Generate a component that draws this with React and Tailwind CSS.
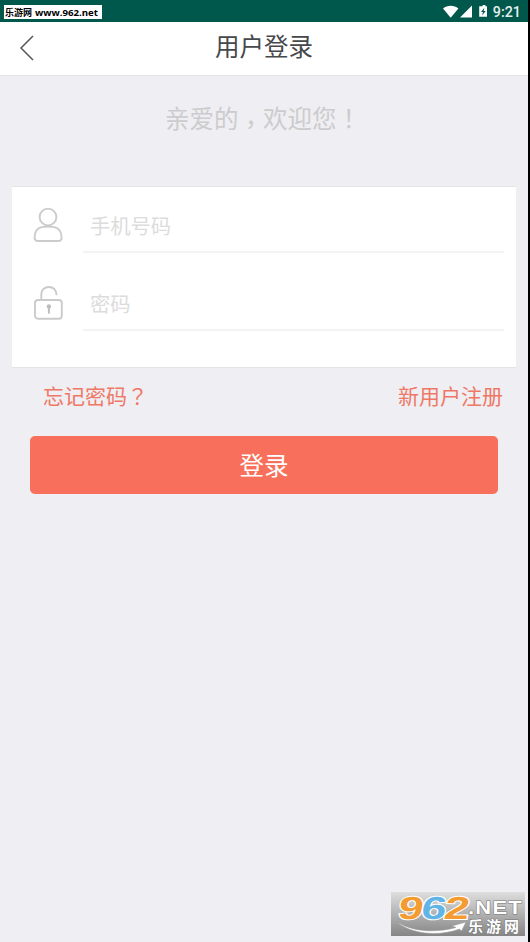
import React from 'react';

const BackIcon = () => (
  <svg width="16" height="26" viewBox="0 0 16 26" fill="none" stroke="#55575a" strokeWidth="1.5">
    <path d="M14 1 L2 13 L14 25" />
  </svg>
);

const UserIcon = () => (
  <svg width="30" height="36" viewBox="0 0 30 36" fill="none" stroke="#cbcbcb" strokeWidth="1.9">
    <circle cx="15" cy="10" r="8.4" />
    <path d="M8.5 20.2 C4 21.5 1.6 25.5 1.6 30.5 C1.6 33 2.6 34 4.7 34 H25.2 C27.4 34 28.6 33 28.6 30.5 C28.6 25.5 25.9 21.5 21.5 20.2 C19.5 19.4 10.5 19.4 8.5 20.2 Z" />
  </svg>
);

const LockIcon = () => (
  <svg width="30" height="36" viewBox="0 0 30 36" fill="none" stroke="#cbcbcb" strokeWidth="1.9">
    <path d="M8.3 15 V9.4 C8.3 5 11.5 2 15.8 2 C20.2 2 23.2 5 23.7 10.2" />
    <rect x="2" y="15" width="26.8" height="18.8" rx="3" />
    <circle cx="15.9" cy="21.4" r="2.2" fill="#bdbdbd" stroke="none" />
    <path d="M15.9 22 V28.6" stroke="#bdbdbd" strokeWidth="2" />
  </svg>
);

const StatusBar = () => (
  <div className="flex h-[22px] items-center justify-between bg-[#00574b] pt-px pr-[7px] pl-1">
    <div className="flex h-[14px] w-[98px] items-center bg-white pl-px text-black">
      <svg width="97" height="14">
        <text x="0" y="11" fontSize="9" fontWeight="700" textLength="27" fontFamily="Noto Sans CJK SC, sans-serif">乐游网</text>
        <text x="30" y="11" fontSize="9.5" fontWeight="700" textLength="63" lengthAdjust="spacingAndGlyphs" fontFamily="Open Sans, sans-serif">www.962.net</text>
      </svg>
    </div>
    <div className="flex items-center">
      <svg width="50" height="14" viewBox="0 0 50 14" fill="#fff">
        <path d="M0 3.6 C4.2 -0.2 11.2 -0.2 15.4 3.6 L7.7 12.8 Z" />
        <path d="M29 0.6 V12.6 H17 Z" />
        <path d="M38 1.2 H39.6 V-0.2 H42.4 V1.2 H44 V11.8 H36.2 V1.2 Z" />
        <path d="M41.4 2.8 L38 7 H40 L39 10.4 L42.7 6 H40.6 Z" fill="#00574b" />
      </svg>
      <span className="font-['Roboto',sans-serif] text-[14.3px] leading-[14px] font-medium text-[#e4efed]">9:21</span>
    </div>
  </div>
);

// Full-width punctuation, centred in its cell
const Mark = ({ children, className = '' }) => (
  <span lang="zh-TW" className={`font-['Noto_Sans_CJK_TC',sans-serif] ${className}`}>{children}</span>
);

const Field = ({ icon, placeholder, type }) => (
  <label className="flex h-[78px] pl-[21px] pr-3">
    <span className="mt-5 w-[50px] shrink-0">{icon}</span>
    <input
      type={type}
      placeholder={placeholder}
      className="h-[66px] min-w-0 grow border-b-2 border-[#f3f3f3] bg-transparent pt-3 pl-[7px] text-[20.3px] outline-none placeholder:text-[#dcdcdc]"
    />
  </label>
);

const Watermark = () => (
  <svg className="absolute right-[3px] bottom-[6px] overflow-visible" width="134" height="44" viewBox="0 0 134 44">
    <defs>
      <linearGradient id="plate" x1="0" y1="0" x2="0" y2="1">
        <stop offset="0" stopColor="#dedede" />
        <stop offset="1" stopColor="#858585" />
      </linearGradient>
    </defs>
    <rect width="134" height="44" fill="url(#plate)" />
    <g transform="translate(0 27) skewX(-9)" fontFamily="Liberation Sans, sans-serif" fontWeight="700" fontSize="32" stroke="#fff" strokeWidth="2" paintOrder="stroke">
      <text x="6" y="0" fill="#f49b31" textLength="25" lengthAdjust="spacingAndGlyphs">9</text>
      <text x="29" y="0" fill="#63b4e6" textLength="25" lengthAdjust="spacingAndGlyphs">6</text>
      <text x="52" y="0" fill="#f49b31" textLength="25" lengthAdjust="spacingAndGlyphs">2</text>
    </g>
    <path d="M6 30 C22 40 45 41 65 35.5 L61 34 L75 30 L70.5 39 L68.5 37 C47 45 20 42 6 30 Z" fill="#fff" stroke="#969696" strokeWidth=".5" />
    <g fill="#fff" stroke="#777" strokeWidth="1" paintOrder="stroke" fontWeight="700">
      <text x="77" y="21.5" fontSize="18" letterSpacing="1" fontFamily="Liberation Sans, sans-serif" textLength="55" lengthAdjust="spacingAndGlyphs">.NET</text>
      <text x="77" y="40" fontSize="15" fontFamily="Noto Sans CJK SC, sans-serif" textLength="51">乐游网</text>
    </g>
  </svg>
);

const App = () => {
  return (
    <div className="h-[942px] w-[530px] bg-black pr-[2px]">
      <div className="relative h-full bg-[#efeef3] font-['Noto_Sans_CJK_SC',sans-serif]">
        <StatusBar />

        <header className="grid h-[54px] grid-cols-[1fr_auto_1fr] items-center border-b border-[#e3e3e5] bg-white">
          <button className="mb-[2px] ml-[19px] w-4" aria-label="返回">
            <BackIcon />
          </button>
          <h1 className="pb-[5px] text-[24.5px] leading-[36px] text-[#46484b]">用户登录</h1>
        </header>

        <p className="ml-[165px] pt-6 text-[24.5px] leading-[36px] text-[#cccccd]">
          亲爱的<Mark className="relative top-[6px]">，</Mark>欢迎您<Mark>！</Mark>
        </p>

        <form>
          {/* Account and password */}
          <div className="mx-3 mt-[50px] h-[182px] border-y border-[#e4e4e6] bg-white">
            <Field icon={<UserIcon />} placeholder="手机号码" type="text" />
            <Field icon={<LockIcon />} placeholder="密码" type="password" />
          </div>

          <div className="flex justify-between pt-3 pr-[25px] pl-[43px] text-[21px] leading-[30px] text-[#ee7865]">
            <a>忘记密码<Mark>？</Mark></a>
            <a>新用户注册</a>
          </div>

          <div className="px-[30px] pt-[26px]">
            <button
              type="submit"
              className="h-[58px] w-full rounded-[5px] bg-[#f8705b] text-[24.5px] leading-[58px] text-white"
            >
              登录
            </button>
          </div>
        </form>

        <Watermark />
      </div>
    </div>
  );
};

export default App;
